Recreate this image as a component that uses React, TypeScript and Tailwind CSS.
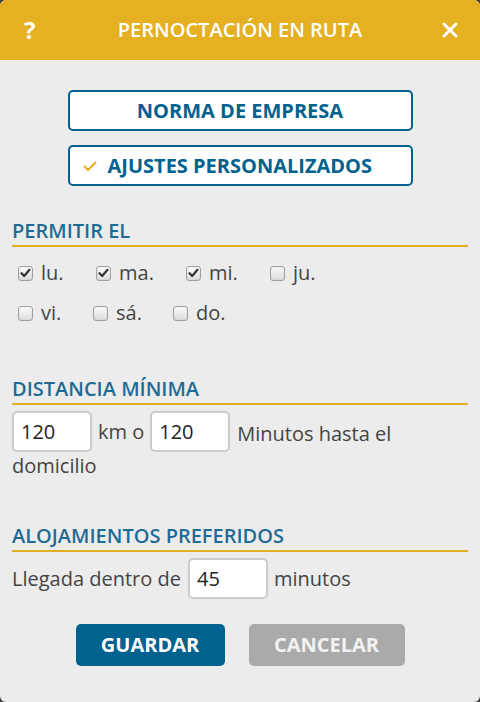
import React from "react";

const font = { fontFamily: '"Open Sans", "Noto Sans", sans-serif' };

function Check({ checked, label, w }: { checked: boolean; label: string; w: string }) {
  return (
    <div className={`flex items-center ${w}`}>
      <span className="w-[15px] h-[15px] rounded-[3px] border border-[#a0a0a0] bg-gradient-to-b from-[#fafafa] to-[#dcdcdc] shadow-[inset_0_0_1px_rgba(0,0,0,0.2)] flex items-center justify-center shrink-0">
        {checked && (
          <svg width="11" height="10" viewBox="0 0 11 10">
            <path d="M1.5 5.2 L4.2 8 L9.5 1.8" fill="none" stroke="#333" strokeWidth="2.2" strokeLinecap="round" strokeLinejoin="round" />
          </svg>
        )}
      </span>
      <span className="ml-[8px] text-[20px] text-[#444] leading-none">{label}</span>
    </div>
  );
}

function Heading({ children }: { children: React.ReactNode }) {
  return (
    <div className="border-b-2 border-[#e5ae22] pb-[2px]">
      <div className="text-[20px] font-semibold text-[#1e6b96] leading-[24px]">{children}</div>
    </div>
  );
}

function NumInput({ value }: { value: string }) {
  return (
    <div className="w-[80px] h-[41px] border-2 border-[#cbcbcb] rounded-[5px] bg-white flex items-center px-[7px] text-[20px] text-[#222] shrink-0">
      {value}
    </div>
  );
}

export default function App() {
  return (
    <div className="w-[480px] h-[702px] bg-[#3c3c3c]" style={font}>
      <div className="w-full h-full rounded-[6px] overflow-hidden bg-[#ececec] flex flex-col">
        <div className="h-[60px] bg-[#e5b022] flex items-center justify-between px-[24px] text-white">
          <span className="text-[24px] font-bold w-[14px] leading-none">?</span>
          <span className="text-[20px] font-semibold">PERNOCTACIÓN EN RUTA</span>
          <svg width="16" height="16" viewBox="0 0 16 16" className="mr-[-2px]">
            <path d="M2 2 L14 14 M14 2 L2 14" stroke="white" strokeWidth="3" strokeLinecap="round" />
          </svg>
        </div>

        <div className="px-[12px] pt-[30px] flex flex-col">
          <div className="flex flex-col items-center gap-[14px]">
            <div className="w-[345px] h-[41px] border-2 border-[#00628f] rounded-[5px] bg-white flex items-center justify-center text-[20px] font-bold text-[#00628f]">
              NORMA DE EMPRESA
            </div>
            <div className="w-[345px] h-[41px] border-2 border-[#00628f] rounded-[5px] bg-white flex items-center text-[20px] font-bold text-[#00628f] pl-[12px]">
              <svg width="16" height="12" viewBox="0 0 16 12" className="mr-[10px]">
                <path d="M2 6 L6 10 L14 2" fill="none" stroke="#e5ae22" strokeWidth="2" />
              </svg>
              AJUSTES PERSONALIZADOS
            </div>
          </div>

          <div className="mt-[33px]">
            <Heading>PERMITIR EL</Heading>
          </div>
          <div className="pl-[6px] pt-[16px] flex flex-col gap-[20px]">
            <div className="flex items-center">
              <Check checked label="lu." w="w-[78px]" />
              <Check checked label="ma." w="w-[90px]" />
              <Check checked label="mi." w="w-[84px]" />
              <Check checked={false} label="ju." w="w-[60px]" />
            </div>
            <div className="flex items-center">
              <Check checked={false} label="vi." w="w-[75px]" />
              <Check checked={false} label="sá." w="w-[80px]" />
              <Check checked={false} label="do." w="w-[60px]" />
            </div>
          </div>

          <div className="mt-[54px]">
            <Heading>DISTANCIA MÍNIMA</Heading>
          </div>
          <div className="mt-[6px] text-[20px] text-[#444] leading-[32px]">
            <div className="flex items-center">
              <NumInput value="120" />
              <span className="ml-[6px] mr-[6px]">km o</span>
              <NumInput value="120" />
              <span className="ml-[7px] mt-[4px]">Minutos hasta el</span>
            </div>
            <div className="mt-[-2px]">domicilio</div>
          </div>

          <div className="mt-[42px]">
            <Heading>ALOJAMIENTOS PREFERIDOS</Heading>
          </div>
          <div className="mt-[6px] flex items-center text-[20px] text-[#444]">
            <span className="mr-[7px]">Llegada dentro de</span>
            <NumInput value="45" />
            <span className="ml-[6px]">minutos</span>
          </div>

          <div className="mt-[25px] flex justify-center gap-[24px]">
            <div className="w-[149px] h-[42px] rounded-[5px] bg-[#00628f] text-white text-[20px] font-bold flex items-center justify-center">
              GUARDAR
            </div>
            <div className="w-[156px] h-[42px] rounded-[5px] bg-[#aaaaaa] text-[#f2f2f2] text-[20px] font-bold flex items-center justify-center">
              CANCELAR
            </div>
          </div>
        </div>
      </div>
    </div>
  );
}
